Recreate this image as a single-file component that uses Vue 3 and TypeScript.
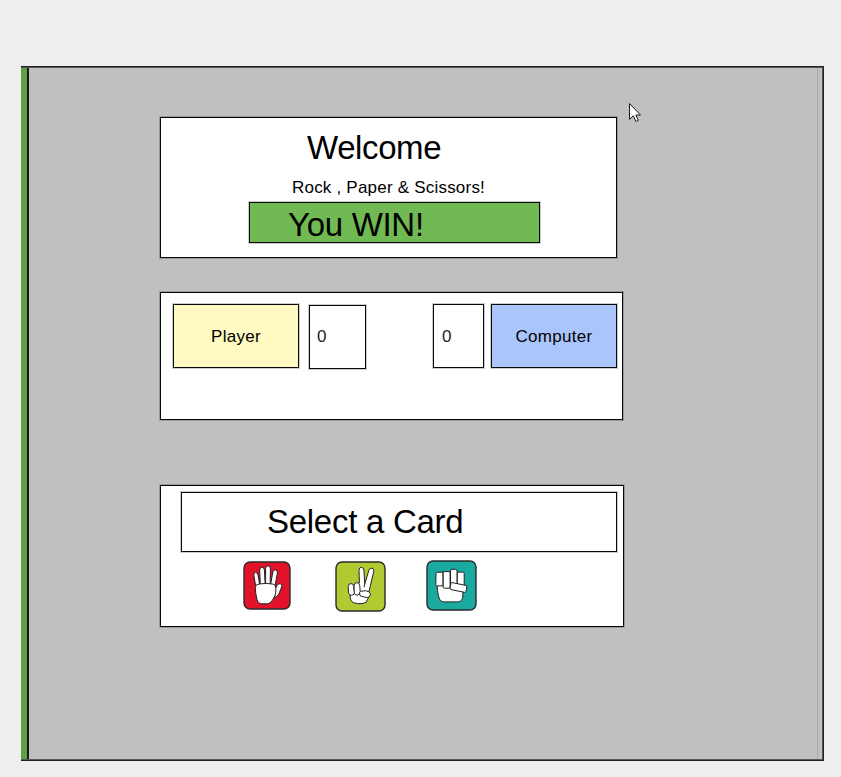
<script setup lang="ts">
import { ref } from 'vue'

type Card = 'paper' | 'scissors' | 'rock'

const cards: Card[] = ['paper', 'scissors', 'rock']
const playerScore = ref(0)
const computerScore = ref(0)
const message = ref('You WIN!')
</script>

<template>
  <main class="screen">
    <div class="stage">
      <section class="box welcome">
        <h1 class="title">Welcome</h1>
        <p class="subtitle">Rock , Paper &amp; Scissors!</p>
        <div class="box result">{{ message }}</div>
      </section>

      <section class="box scores">
        <div class="box name player">Player</div>
        <div class="box score player-score">{{ playerScore }}</div>
        <div class="box score computer-score">{{ computerScore }}</div>
        <div class="box name computer">Computer</div>
      </section>

      <section class="box picker">
        <h2 class="box prompt">Select a Card</h2>
        <div class="cards">
          <button v-for="card in cards" :key="card" class="card" :class="card" :aria-label="card">
            <svg v-if="card === 'paper'" width="48" height="49" viewBox="0 0 48 49">
              <rect x="1" y="1" width="46" height="47" rx="6" fill="#e3122b" />
              <g class="hand">
                <path d="M12.6 25 L10.9 14.2 Q10.7 11.3 12.6 11.3 Q14.4 11.3 15 14 L17 25Z" />
                <path d="M17.3 24 L16.7 9 Q16.7 6.2 19 6.2 Q21.1 6.2 21.4 9 L22.2 24Z" />
                <path d="M22.6 24 L22.6 7.5 Q22.8 4.8 25 4.8 Q27.4 4.8 27.4 8 L27.2 24Z" />
                <path d="M27.5 24 L29.9 10.8 Q30.6 8.4 32.6 8.9 Q34.8 9.4 34.4 12 L32 25Z" />
                <path d="M32.3 27.5 L34.2 24.2 Q35.8 22.2 37.9 22.9 Q39.7 23.8 38.7 26 Q37.2 29 36.4 32 Q35 35.4 31.6 36.8Z" />
                <path d="M12.3 26.5 Q12.3 23.3 16 23 Q23 21.9 29.8 23 Q32.8 23.4 32.9 27.5 Q33.5 33.5 30.6 37.2 Q28.2 42.6 24.8 42.8 H18.6 Q15.2 42.8 14 38.4 Q12.3 32 12.3 26.5Z" />
              </g>
            </svg>
            <svg v-else-if="card === 'scissors'" width="51" height="51" viewBox="0 0 51 51">
              <rect x="1" y="1" width="49" height="49" rx="6" fill="#b2ca31" />
              <g class="hand">
                <path d="M24.6 31 L24 9.5 Q24.1 6.2 26.3 6.2 Q28.7 6.2 28.9 9.2 L30 26Z" />
                <path d="M27.5 31 L33.8 9.4 Q34.8 6.5 37.1 7.2 Q39.5 7.9 38.7 10.7 L33.2 34Z" />
                <path class="fill" d="M15.2 33.5 Q14.6 40.2 18.8 41.9 Q27 43.8 31.2 41.2 L34 36 L33.5 31 L29.3 26.5 L24.3 22Z" />
                <path class="line" d="M15.2 33.5 Q14.6 40.2 18.8 41.9 Q27 43.8 31.2 41.2 L33.8 36" />
                <path d="M13.6 32.2 L13.2 25.6 Q13.3 22.6 15.9 22.6 Q18.5 22.6 18.7 25.4 L19.5 31.5 Q19 34.6 16.4 34.3 Q14.2 34 13.6 32.2Z" />
                <path d="M19.3 32.2 L19 24.9 Q19.2 21.6 21.9 21.6 Q24.5 21.6 24.8 24.8 L25.2 30.6 Q24.7 34.2 22 34.2 Q20 34.2 19.3 32.2Z" />
                <path d="M26 30.2 Q31.4 29 34.1 30.8 Q36.4 33 34.8 35.4 Q33.3 37.2 29.5 36.2 L25 34.7 Q23.6 31 26 30.2Z" />
              </g>
            </svg>
            <svg v-else width="51" height="51" viewBox="0 0 51 51">
              <rect x="1" y="1" width="49" height="49" rx="6" fill="#1aaaa0" />
              <g class="hand">
                <path d="M11 25 Q11.4 31 12.4 36 Q13.7 41.9 17 41.9 H31.5 Q36.4 41.9 36.9 36 V30 L33 23 H14Z" />
                <path d="M10.8 12.2 H17 V25.9 H10.6 Q9.7 25.9 9.8 24.8 L10 13Z" />
                <path d="M17.2 11.6 H23 Q24.1 11.6 24.1 13 V26.9 Q24.1 28.2 23 28.2 H18.2 Q17.2 28.2 17.2 26.9Z" />
                <path d="M24.5 11 Q24.5 9.3 26 9.3 H29.5 Q31.1 9.3 31.1 11 V25 H24.5Z" />
                <path d="M31.3 12.1 H37 Q38.2 12.1 38.2 13.5 V26 H31.3Z" />
                <path d="M26 22.6 L40 25.4 Q41.1 25.7 40.9 27 L40 31.5 Q39.7 32.6 38.5 32.3 L25 29.6 Q23.9 29.3 24.1 28 L24.9 23.5 Q25.1 22.4 26 22.6Z" />
              </g>
            </svg>
          </button>
        </div>
      </section>
    </div>
    <svg class="cursor" width="14" height="22" viewBox="0 0 14 22">
      <path d="M1.5 1.5 V17.4 L5.3 13.8 L7.9 19.5 L10.3 18.4 L7.8 13 H12.5Z" />
    </svg>
  </main>
</template>

<style>
body {
  background: #eee;
}
</style>

<style scoped>
.screen {
  position: relative;
  box-sizing: border-box;
  width: 841px;
  height: 777px;
  padding: 66px 0 0 21px;
  overflow: hidden;
  background: #eee;
  color: #000;
  font-family: "Liberation Sans", Arial, sans-serif;
}

.stage {
  box-sizing: border-box;
  display: flex;
  flex-direction: column;
  align-items: flex-start;
  width: 803px;
  height: 695px;
  padding: 50px 5px 0 139px;
  border: 1px solid #222;
  border-left: 0;
  background:
    linear-gradient(#619f45, #619f45) 0 0 / 6px 100% no-repeat,
    linear-gradient(#181818, #181818) 6px 0 / 2px 100% no-repeat,
    linear-gradient(#aaa, #aaa) 796px 0 / 1px 100% no-repeat,
    #c0c0c0;
  box-shadow: inset -1px 1px #555, inset 0 -1px #555;
}

.box {
  box-sizing: border-box;
  border: 1px solid #080808;
  background: #fff;
  box-shadow: 0 0 0 1px rgba(0, 0, 0, 0.2);
}

.welcome {
  display: flex;
  flex-direction: column;
  width: 457px;
  height: 141px;
}

.title,
.subtitle,
.prompt {
  margin: 0;
  font-weight: 400;
}

.title {
  margin: 11px 0 0 146px;
  font-size: 33px;
  line-height: 38px;
  letter-spacing: -0.4px;
}

.subtitle {
  margin: 11px 0 0 131px;
  font-size: 17px;
  line-height: 20px;
  letter-spacing: 0.21px;
}

.result {
  width: 291px;
  height: 41px;
  margin: 4px 0 0 88px;
  padding-left: 38px;
  background: #71b952;
  font-size: 33px;
  line-height: 44px;
  letter-spacing: -0.3px;
}

.scores {
  display: flex;
  width: 463px;
  height: 128px;
  margin-top: 34px;
  padding: 11px 0 0 12px;
  font-size: 17px;
}

.name {
  width: 126px;
  height: 64px;
  line-height: 64px;
  text-align: center;
}

.player {
  background: #fff9c2;
  letter-spacing: 0.3px;
}

.computer {
  margin-left: 7px;
  background: #a9c5fb;
  letter-spacing: 0.3px;
}

.score {
  height: 64px;
  padding-left: 8px;
  color: #222;
  line-height: 64px;
}

.player-score {
  width: 57px;
  margin: 1px 0 0 10px;
  padding-left: 7px;
  line-height: 62px;
}

.computer-score {
  width: 51px;
  margin-left: 67px;
}

.picker {
  width: 464px;
  height: 142px;
  margin-top: 65px;
  padding: 6px 0 0 20px;
}

.prompt {
  width: 436px;
  height: 60px;
  padding-left: 85px;
  font-size: 33px;
  line-height: 57px;
  letter-spacing: -0.28px;
}

.cards {
  display: flex;
  align-items: flex-start;
  margin: 8px 0 0 62px;
}

.card {
  display: block;
  padding: 0;
  border: 0;
  background: none;
}

.card svg {
  display: block;
}

.paper {
  padding-top: 1px;
}

.scissors {
  margin-left: 44px;
  padding-top: 1px;
}

.rock {
  margin-left: 40px;
}

.card rect {
  stroke: #292b2a;
  stroke-width: 1.4;
}

.hand path {
  fill: #fff;
  stroke: #222;
  stroke-width: 1;
  stroke-linejoin: round;
}

.hand .fill {
  stroke: none;
}

.hand .line {
  fill: none;
}

.cursor {
  position: absolute;
  top: 102px;
  left: 628px;
  fill: #fff;
  stroke: #171722;
  stroke-width: 1;
}
</style>
